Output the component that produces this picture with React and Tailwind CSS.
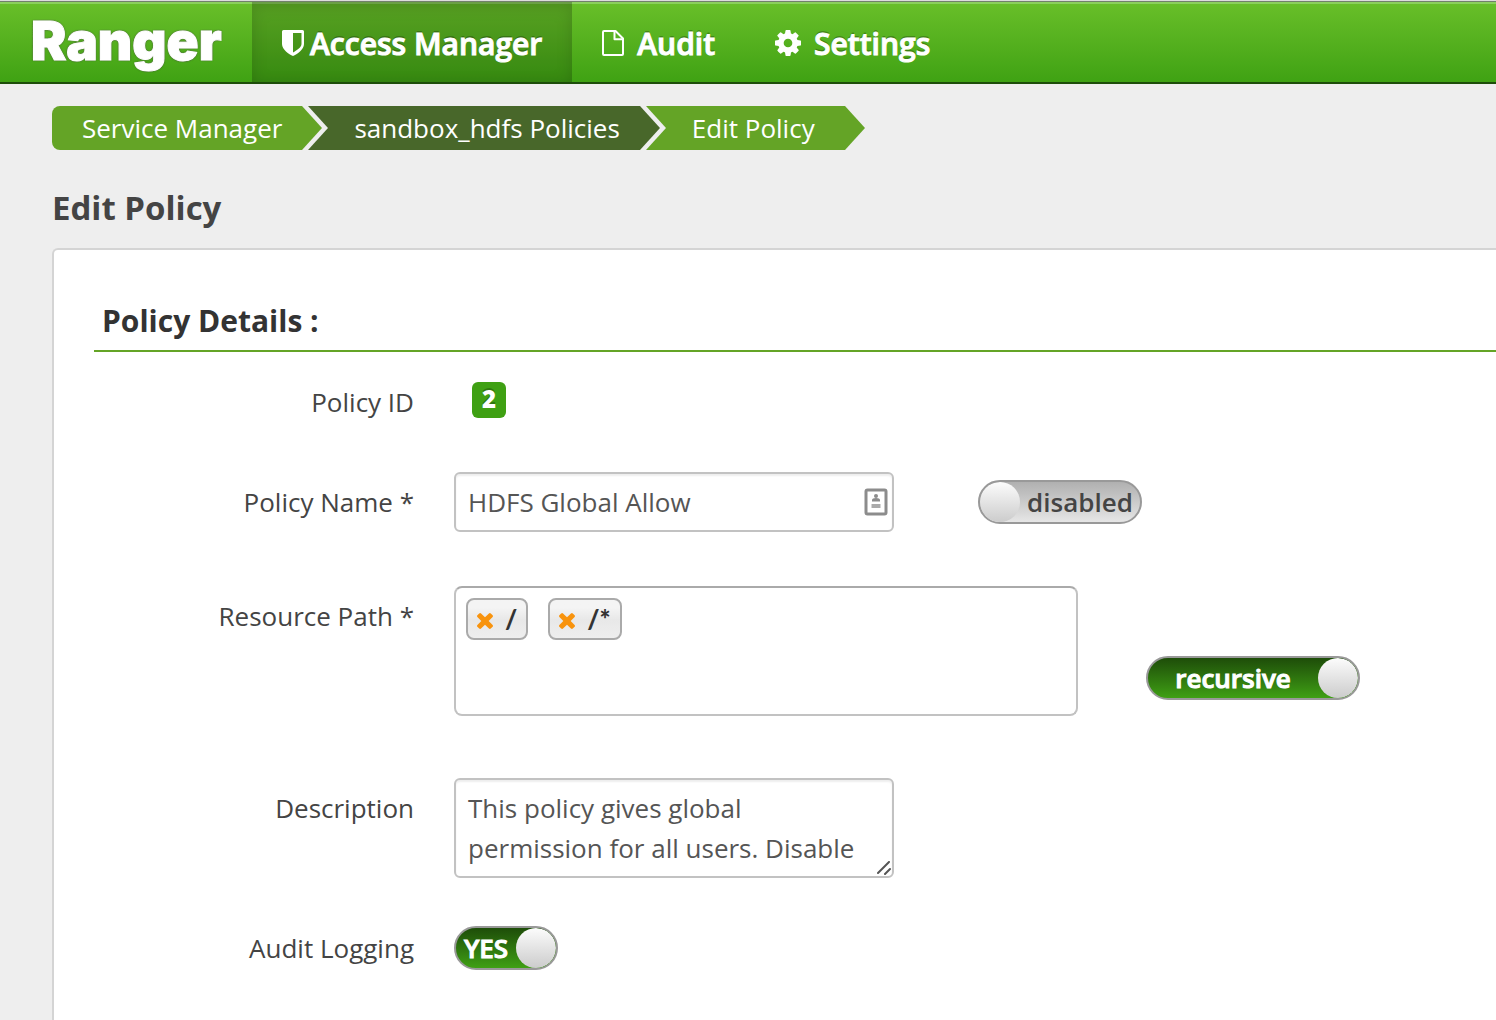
import { useState } from "react";

function ShieldIcon() {
  return (
    <svg viewBox="0 0 22 26" className="h-[26px] w-[22px]" aria-hidden="true">
      <path
        fillRule="evenodd"
        fill="currentColor"
        d="M1.500 0H20.500Q22 0 22 1.500V14C22 19.500 15 24.500 11 26C7 24.500 0 19.500 0 14V1.500Q0 0 1.500 0ZM11 3V22.500C14.500 20.500 19.500 17.500 19.500 14V3Z"
      />
    </svg>
  );
}

function FileIcon() {
  return (
    <svg viewBox="0 0 22 26" className="h-[26px] w-[22px]" fill="none" stroke="currentColor" strokeWidth="2" strokeLinejoin="round" aria-hidden="true">
      <path d="M2 1H13.500L21 8.500V24Q21 25 20 25H2Q1 25 1 24V2Q1 1 2 1Z" />
      <path d="M12.500 1V9.200H21" />
    </svg>
  );
}

function CogIcon() {
  return (
    <svg viewBox="0 -128 1536 1536" className="h-[26px] w-[26px]" fill="currentColor" fillRule="evenodd" aria-hidden="true">
      <path d="M1024 640a256 256 0 1 0-512 0a256 256 0 1 0 512 0zM1536 531v222q0 12-8 23t-20 13l-185 28q-19 54-39 91 35 50 107 138 10 12 10 25t-9 23q-27 37-99 108t-94 71q-12 0-26-9l-138-108q-44 23-91 38-16 136-29 186-7 28-36 28h-222q-14 0-24.500-8.500t-11.500-21.500l-28-184q-49-16-90-37l-141 107q-10 9-25 9-14 0-25-11-126-114-165-168-7-10-7-23 0-12 8-23 15-21 51-66.500t54-70.500q-27-50-41-99l-183-27q-13-2-21-12.500t-8-23.500v-222q0-12 8-23t19-13l186-28q14-46 39-92-40-57-107-138-10-12-10-24 0-10 9-23 26-36 98.500-107.500t94.500-71.500q13 0 26 10l138 107q44-23 91-38 16-136 29-186 7-28 36-28h222q14 0 24.500 8.500t11.500 21.500l28 184q49 16 90 37l142-107q9-9 24-9 13 0 25 10 129 119 165 170 7 8 7 22 0 12-8 23-15 21-51 66.500t-54 70.500q26 50 41 98l183 28q13 2 21 12.500t8 23.500z" />
    </svg>
  );
}

function RemoveIcon() {
  return (
    <svg viewBox="302 366 1188 1188" className="h-4 w-4" fill="#f8930d" aria-hidden="true">
      <path d="M1490 1322q0 40-28 68l-136 136q-28 28-68 28t-68-28l-294-294-294 294q-28 28-68 28t-68-28l-136-136q-28-28-28-68t28-68l294-294-294-294q-28-28-28-68t28-68l136-136q28-28 68-28t68 28l294 294 294-294q28-28 68-28t68 28l136 136q28 28 28 68t-28 68l-294 294 294 294q28 28 28 68z" />
    </svg>
  );
}

function ContactIcon() {
  return (
    <svg viewBox="0 0 24 28" className="h-7 w-6" aria-hidden="true">
      <rect x="2" y="2" width="20" height="24" rx="1.500" fill="#fff" stroke="#8c8c8c" strokeWidth="3" />
      <circle cx="12" cy="8" r="2" fill="#8c8c8c" />
      <path d="M8 13.500V12Q8 10 12 10T16 12V13.500Z" fill="#8c8c8c" />
      <path d="M7.500 16H16.500V20H7.500Z" fill="#aaa" />
    </svg>
  );
}

const crumbs = [
  { label: "Service Manager", box: "z-30 rounded-l-lg bg-[#64a426] pl-[30px] pr-5", tip: "fill-[#64a426]" },
  { label: "sandbox_hdfs Policies", box: "z-20 bg-[#48672a] pl-[52px] pr-5", tip: "fill-[#48672a]" },
  { label: "Edit Policy", box: "z-10 bg-[#64a426] pl-[52px] pr-[30px]", tip: "fill-[#64a426]" },
];

function Breadcrumb() {
  return (
    <nav aria-label="Breadcrumb" className="mt-[22px]">
      <ol className="flex">
        {crumbs.map((c, i) => (
          <li key={c.label} className={"relative h-11 " + c.box}>
            <a href="#" className="block whitespace-nowrap text-[26px] leading-11 font-medium text-white">
              {c.label}
            </a>
            <svg viewBox="0 0 26 44" className="absolute top-0 left-full h-11 w-[26px]" aria-hidden="true">
              {i < 2 && <path d="M0 0H6L26 22L6 44H0Z" fill="#eee" />}
              <path d="M0 0L20 22L0 44Z" className={c.tip} />
            </svg>
          </li>
        ))}
      </ol>
    </nav>
  );
}

function Toggle({ id, name, onText, offText, initial, size }) {
  const [on, setOn] = useState(initial);
  return (
    <label
      htmlFor={id}
      className={
        "relative flex h-11 cursor-pointer items-center overflow-hidden rounded-full border-2 border-[#999] text-[26px] leading-10 font-semibold " +
        size +
        (on ? " bg-linear-to-b from-[#1e4d09] to-[#3fa014] text-white [-webkit-text-stroke:1px_white]" : " flex-row-reverse bg-linear-to-b from-[#b0b0b0] to-[#e6e6e6] text-[#444]")
      }
    >
      <input id={id} type="checkbox" aria-label={name} checked={on} onChange={() => setOn(!on)} className="sr-only" />
      <span className="flex-1 text-center">{on ? onText : offText}</span>
      <span className="h-10 w-10 shrink-0 rounded-full bg-linear-to-b from-[#fcfcfc] to-[#cccccc]" />
    </label>
  );
}

function Chip({ text }) {
  return (
    <li className="flex h-[42px] items-center gap-3 rounded-lg border-2 border-[#aaa] bg-linear-to-b from-[#f4f4f4] from-20% via-[#e8e8e8] via-52% to-[#eee] px-[9px] font-['Lato',sans-serif] text-[26px] font-black text-[#333]">
      <button type="button" aria-label={"Remove " + text} className="mt-1">
        <RemoveIcon />
      </button>
      <span className="leading-9">{text}</span>
    </li>
  );
}

function Row({ label, htmlFor, className, children }) {
  const text = "w-80 shrink-0 pt-[10px] text-right text-[26px] leading-10 text-[#444]";
  return (
    <div className={"flex items-start gap-10 " + className}>
      {htmlFor ? (
        <label htmlFor={htmlFor} className={text}>{label}</label>
      ) : (
        <span className={text}>{label}</span>
      )}
      {children}
    </div>
  );
}

const field = "border-2 border-[#c2c2c2] bg-white px-3 text-[26px] leading-10 text-[#555] shadow-[inset_0_2px_2px_rgba(0,0,0,0.07)] outline-none";
const navLink = "flex items-center pt-[2px] text-[30px] font-semibold text-white [-webkit-text-stroke:1px_white] [text-shadow:0_-2px_0_rgba(0,0,0,0.25)]";

export default function App() {
  return (
    <div className="min-h-screen overflow-hidden bg-[#eee] font-['Open_Sans',sans-serif]">
      <header className="border-t border-[#ddd]">
        <div className="flex h-[83px] items-stretch border-t border-b-2 border-t-[#71806a] border-b-[#1d4d0a] bg-linear-to-b from-[#69bf29] to-[#3fa213] shadow-[inset_0_2px_0_#8bcf5c]">
          <a
            href="#"
            className="flex w-[252px] items-center pb-[2px] pl-[31px] font-['Inter','Liberation_Sans',sans-serif] text-[53px] leading-none font-black text-white [-webkit-text-stroke:1px_white] [text-shadow:0_0_2px_#555,0_0_2px_#555]"
          >
            Ranger
          </a>
          <nav className="flex" aria-label="Main">
            <a href="#" className={navLink + " gap-[6px] bg-black/15 px-[30px] shadow-[inset_0_4px_16px_rgba(0,0,0,0.15)]"}>
              <ShieldIcon />
              Access Manager
            </a>
            <a href="#" className={navLink + " gap-[13px] px-[30px]"}>
              <FileIcon />
              Audit
            </a>
            <a href="#" className={navLink + " gap-[13px] px-[30px]"}>
              <CogIcon />
              Settings
            </a>
          </nav>
        </div>
      </header>

      <main className="pl-[52px]">
        <Breadcrumb />
        <h1 className="mt-8 text-[33px] leading-[52px] font-bold text-[#444]">Edit Policy</h1>

        <section className="mt-[14px] rounded-tl-md border-t-2 border-l-2 border-[#d4d4d4] bg-white pt-[50px] pb-[50px] pl-10">
          <h2 className="border-b-2 border-[#64a426] pb-2 pl-2 text-[30px] leading-[42px] font-bold text-[#333]">
            Policy Details :
          </h2>
          <form className="pt-5" onSubmit={(e) => e.preventDefault()}>
            <Row label="Policy ID" className="mb-10">
              <span className="mt-[10px] ml-[18px] h-9 rounded-md bg-[#3fa013] px-[10px] text-2xl leading-[34px] font-extrabold text-white [text-shadow:0_-2px_0_rgba(0,0,0,0.25)]">
                2
              </span>
            </Row>
            <Row label="Policy Name *" htmlFor="policy-name" className="mt-[50px]">
              <div className="relative">
                <input id="policy-name" type="text" defaultValue="HDFS Global Allow" className={field + " block h-[60px] w-[440px] rounded-md pr-12"} />
                <span className="absolute top-4 right-[6px]">
                  <ContactIcon />
                </span>
              </div>
              <div className="mt-2 ml-11">
                <Toggle id="policy-enabled" name="Policy status" onText="enabled" offText="disabled" initial={false} size="w-[164px]" />
              </div>
            </Row>
            <Row label="Resource Path *" className="mt-[54px]">
              <ul className="flex h-[130px] w-[624px] items-start gap-5 rounded-lg border-2 border-[#c2c2c2] border-t-[#aaa] bg-white p-[10px]">
                <Chip text="/" />
                <Chip text="/*" />
              </ul>
              <div className="mt-[70px] ml-7">
                <Toggle id="recursive" name="Recursive" onText="recursive" offText="nonrecursive" initial={true} size="w-[214px]" />
              </div>
            </Row>
            <Row label="Description" htmlFor="description" className="mt-[62px]">
              <div className="relative">
                <textarea
                  id="description"
                  defaultValue="This policy gives global permission for all users. Disable"
                  className={field + " block h-[100px] w-[440px] resize-none overflow-hidden rounded-md py-2"}
                />
                <svg viewBox="0 0 14 14" className="absolute right-[3px] bottom-[3px] h-[14px] w-[14px]" stroke="#555" strokeWidth="2" strokeLinecap="round" aria-hidden="true">
                  <path d="M1 12L12 1M8 13L13 8" />
                </svg>
              </div>
            </Row>
            <Row label="Audit Logging" htmlFor="audit-logging" className="mt-10">
              <div className="mt-2">
                <Toggle id="audit-logging" name="Audit Logging" onText="YES" offText="NO" initial={true} size="w-[104px]" />
              </div>
            </Row>
          </form>
        </section>
      </main>
    </div>
  );
}
